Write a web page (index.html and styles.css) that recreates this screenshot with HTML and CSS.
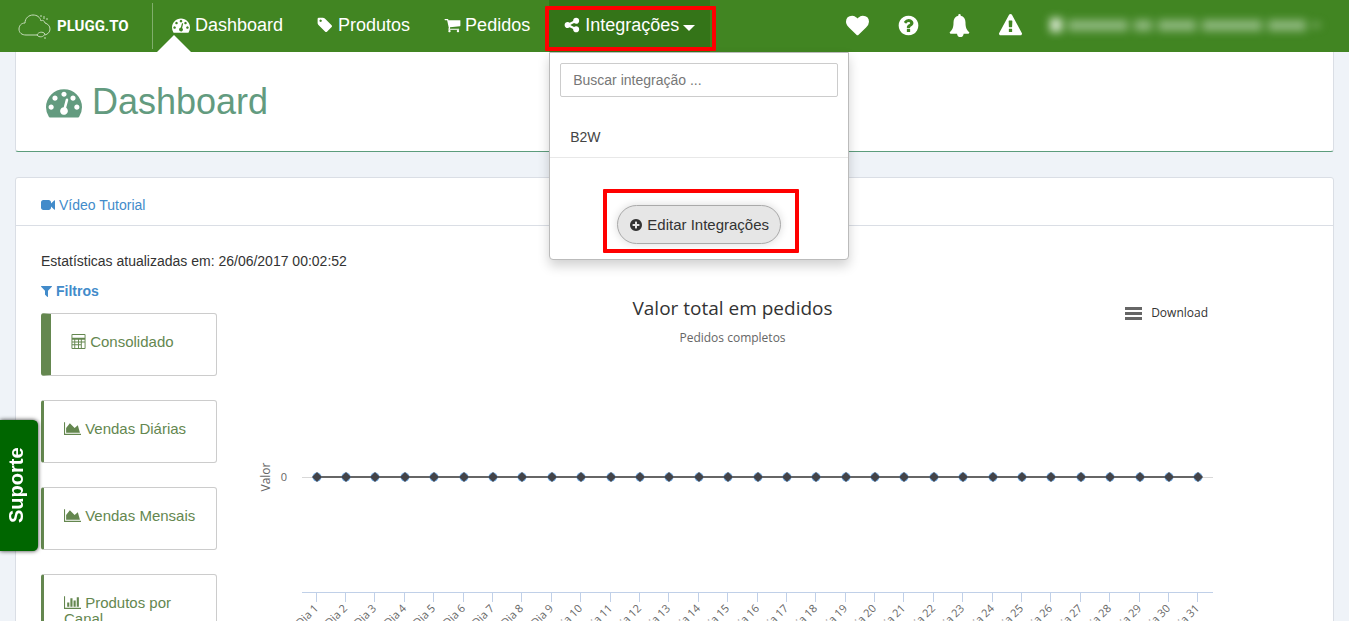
FILE: index.html
```
<!DOCTYPE html>
<html lang="pt-br">
<head>
    <meta charset="UTF-8">
    <meta name="viewport" content="width=device-width, initial-scale=1.0">
    <title>Dashboard - Plugg.To</title>
    <link rel="stylesheet" href="styles.css">
</head>
<body>

    <!-- Ícones -->
    <svg class="sprite" aria-hidden="true">
        <symbol id="i-dashboard" viewBox="0 0 1792 1792"><path d="M384 1152q0-53-37.500-90.500t-90.500-37.500-90.500 37.500-37.500 90.500 37.500 90.500 90.500 37.500 90.500-37.500 37.500-90.500zm192-448q0-53-37.500-90.500t-90.500-37.500-90.500 37.500-37.500 90.500 37.500 90.500 90.500 37.500 90.500-37.500 37.500-90.500zm428 481l101-382q6-26-7.500-48.500t-38.500-29.500-48 6.500-30 39.500l-101 382q-60 5-107 43.500t-63 98.500q-20 77 20 146t117 89 146-20 89-117q16-60-6-117t-72-91zm660-33q0-53-37.500-90.500t-90.500-37.500-90.500 37.500-37.500 90.500 37.500 90.500 90.500 37.500 90.500-37.500 37.500-90.500zm-640-640q0-53-37.500-90.500t-90.500-37.500-90.500 37.500-37.500 90.500 37.500 90.500 90.500 37.500 90.500-37.500 37.500-90.500zm448 192q0-53-37.500-90.500t-90.500-37.500-90.500 37.500-37.500 90.500 37.500 90.500 90.500 37.500 90.500-37.500 37.500-90.500zm320 448q0 261-141 483-19 29-54 29h-1402q-35 0-54-29-141-221-141-483 0-182 71-348t191-286 286-191 348-71 348 71 286 191 191 286 71 348z"/></symbol>
        <symbol id="i-tag" viewBox="64 0 1792 1792"><path d="M576 448q0-53-37.500-90.500t-90.500-37.500-90.500 37.500-37.500 90.500 37.500 90.500 90.500 37.500 90.500-37.500 37.500-90.500zm1067 576q0 53-37 90l-491 492q-39 37-91 37-53 0-90-37l-715-716q-38-37-64.500-101t-26.500-117v-416q0-52 38-90t90-38h416q53 0 117 26.500t102 64.500l715 714q37 39 37 91z"/></symbol>
        <symbol id="i-cart" viewBox="0 0 1792 1792"><path d="M704 1536q0 52-38 90t-90 38-90-38-38-90 38-90 90-38 90 38 38 90zm896 0q0 52-38 90t-90 38-90-38-38-90 38-90 90-38 90 38 38 90zm128-1088v512q0 24-16.500 42.500t-40.500 21.500l-1044 122q13 60 13 70 0 16-24 64h920q26 0 45 19t19 45-19 45-45 19h-1024q-26 0-45-19t-19-45q0-11 8-31.500t16-36 21.500-40 15.500-29.500l-177-823h-204q-26 0-45-19t-19-45 19-45 45-19h256q16 0 28.500 6.500t19.500 15.500 13 24.500 8 26 5.500 29.500 4.500 26h1201q26 0 45 19t19 45z"/></symbol>
        <symbol id="i-share" viewBox="64 0 1792 1792"><path d="M1344 1024q133 0 226.500 93.500t93.500 226.500-93.500 226.500-226.500 93.500-226.500-93.500-93.500-226.500q0-12 2-34l-360-180q-92 86-218 86-133 0-226.500-93.500t-93.500-226.500 93.500-226.500 226.500-93.500q126 0 218 86l360-180q-2-22-2-34 0-133 93.500-226.500t226.500-93.500 226.500 93.500 93.500 226.500-93.500 226.500-226.500 93.500q-126 0-218-86l-360 180q2 22 2 34t-2 34l360 180q92-86 218-86z"/></symbol>
        <symbol id="i-heart" viewBox="0 0 1792 1792"><path d="M896 1664q-26 0-44-18l-624-602q-10-8-27.500-26t-55.500-65.500-68-97.500-53.500-121-23.500-138q0-220 127-344t351-124q62 0 126.500 21.500t120 58 95.500 68.500 76 68q36-36 76-68t95.500-68.500 120-58 126.500-21.500q224 0 351 124t127 344q0 221-229 450l-623 600q-18 18-44 18z"/></symbol>
        <symbol id="i-question" viewBox="0 0 1792 1792"><path d="M1024 1376v-192q0-14-9-23t-23-9h-192q-14 0-23 9t-9 23v192q0 14 9 23t23 9h192q14 0 23-9t9-23zm256-672q0-88-55.500-163t-138.500-116-170-41q-243 0-371 213-15 24 8 42l132 100q7 6 19 6 16 0 25-12 53-68 86-92 34-24 86-24 48 0 85.500 26t37.500 59q0 38-20 61t-68 45q-63 28-115.500 86.500t-52.500 125.500v36q0 14 9 23t23 9h192q14 0 23-9t9-23q0-19 21.500-49.500t54.500-49.500q32-18 49-28.500t46-35 44.500-48 28-60.500 12.500-81zm384 192q0 209-103 385.500t-279.500 279.500-385.500 103-385.500-103-279.500-279.500-103-385.500 103-385.500 279.500-279.500 385.500-103 385.500 103 279.500 279.500 103 385.500z"/></symbol>
        <symbol id="i-bell" viewBox="0 0 1792 1792"><path d="M896 0q-96 0-96 96 0 18 8 44C560 190 430 390 430 640c0 420-90 600-300 780q0 52 38 90t90 38h448q0 106 75 181t181 75 181-75 75-181h316q52 0 90-38t38-90c-210-180-300-360-300-780 0-250-130-450-378-500q8-26 8-44 0-96-96-96z"/></symbol>
        <symbol id="i-warning" viewBox="0 0 1792 1792"><path d="M1024 1375v-190q0-14-9.500-23.500t-22.500-9.500h-192q-13 0-22.500 9.500t-9.500 23.500v190q0 14 9.500 23.500t22.500 9.500h192q13 0 22.500-9.500t9.500-23.500zm-2-374l18-459q0-12-10-19-13-11-24-11h-220q-11 0-24 11-10 7-10 21l17 457q0 10 10 16.500t24 6.500h185q14 0 23.500-6.500t10.500-16.500zm-14-934l768 1408q35 63-2 126-17 29-46.500 46t-63.500 17h-1536q-34 0-63.500-17t-46.500-46q-37-63-2-126l768-1408q17-31 47-49t65-18 65 18 47 49z"/></symbol>
        <symbol id="i-plus" viewBox="128 0 1536 1792"><path d="M1344 960v-128q0-26-19-45t-45-19h-256v-256q0-26-19-45t-45-19h-128q-26 0-45 19t-19 45v256h-256q-26 0-45 19t-19 45v128q0 26 19 45t45 19h256v256q0 26 19 45t45 19h128q26 0 45-19t19-45v-256h256q26 0 45-19t19-45zm320-64q0 209-103 385.500t-279.500 279.500-385.500 103-385.500-103-279.500-279.500-103-385.500 103-385.500 279.500-279.500 385.500-103 385.500 103 279.500 279.500 103 385.500z"/></symbol>
        <symbol id="i-video" viewBox="0 0 1792 1792"><path d="M1792 352v1088q0 42-39 59-13 5-25 5-27 0-45-19l-403-403v166q0 119-84.500 203.500t-203.500 84.500h-704q-119 0-203.500-84.500t-84.500-203.500v-704q0-119 84.500-203.500t203.500-84.500h704q119 0 203.500 84.500t84.500 203.500v165l403-402q18-19 45-19 12 0 25 5 39 17 39 59z"/></symbol>
        <symbol id="i-filter" viewBox="192 0 1408 1792"><path d="M1595 295q17 41-14 70l-493 493v742q0 42-39 59-13 5-25 5-27 0-45-19l-256-256q-19-19-19-45v-486l-493-493q-31-29-14-70 17-39 59-39h1280q42 0 59 39z"/></symbol>
        <symbol id="i-area" viewBox="0 0 2048 1792"><path d="M2048 1536v128h-2048v-1536h128v1408h1920zm-384-1024l256 896h-1664v-576l448-576 576 576z"/></symbol>
        <symbol id="i-bars" viewBox="0 0 2048 1792"><path d="M640 896v512h-256v-512h256zm384-512v1024h-256v-1024h256zm1024 1152v128h-2048v-1536h128v1408h1920zm-640-896v768h-256v-768h256zm384-384v1152h-256v-1152h256z"/></symbol>
        <symbol id="i-calc" viewBox="0 0 15 16"><path fill-rule="evenodd" d="M0 1q0-1 1-1h13q1 0 1 1v14q0 1-1 1H1q-1 0-1-1zM1 1v3h13V1zM1 6v2h2V6zm3 0v2h3V6zm4 0v2h2V6zm3 0v2h3V6zM1 9v2h2V9zm3 0v2h3V9zm4 0v2h2V9zm3 0v6h3V9zM1 12v3h2v-3zm3 0v3h3v-3zm4 0v3h2v-3z"/></symbol>
    </svg>

    <header class="topbar">
        <a class="logo" href="#">
            <svg class="logo-cloud" viewBox="0 0 34 26" aria-hidden="true">
                <path d="M19 22H8C4 22 1 20 1 16c0-3 2-6 6-6 0-5 4-8 8-8 4 0 7 2 8 6M27 10c3 1 5 3 5 6 0 3-2 5-5 6"/>
                <path d="M19 22c1-3 6-4 8-1-1 3-6 4-8 1zM23 8c1-1 3-1 4 2M27 24v2"/>
                <path d="M23 2v2M26 3v3M29 5v2"/>
            </svg>
            <span>PLUGG.TO</span>
        </a>

        <nav class="menu">
            <a class="menu-item ativo" href="#"><svg class="icon"><use href="#i-dashboard"/></svg>Dashboard</a>
            <a class="menu-item" href="#"><svg class="icon"><use href="#i-tag"/></svg>Produtos</a>
            <a class="menu-item" href="#"><svg class="icon"><use href="#i-cart"/></svg>Pedidos</a>
            <div class="menu-grupo">
                <a class="menu-item aberto" href="#"><svg class="icon"><use href="#i-share"/></svg>Integrações<span class="caret"></span></a>
                <div class="destaque destaque-menu"></div>
                <div class="dropdown">
                    <input type="text" class="busca" placeholder="Buscar integração ..." aria-label="Buscar integração">
                    <a class="dropdown-item" href="#">B2W</a>
                    <div class="dropdown-rodape">
                        <button type="button" class="btn-editar"><svg class="icon"><use href="#i-plus"/></svg>Editar Integrações</button>
                        <div class="destaque destaque-botao"></div>
                    </div>
                </div>
            </div>
        </nav>

        <div class="acoes">
            <a href="#" aria-label="Favoritos"><svg class="icon"><use href="#i-heart"/></svg></a>
            <a href="#" aria-label="Ajuda"><svg class="icon"><use href="#i-question"/></svg></a>
            <a href="#" aria-label="Notificações"><svg class="icon"><use href="#i-bell"/></svg></a>
            <a href="#" aria-label="Alertas"><svg class="icon"><use href="#i-warning"/></svg></a>
            <div class="usuario" aria-hidden="true">
                <i class="foto"></i><i class="nome-g"></i><i class="nome-p"></i><i class="nome-m"></i><i class="nome-g"></i><i class="nome-m"></i><i class="seta"></i>
            </div>
        </div>
    </header>

    <main>
        <section class="titulo">
            <h1><svg class="icon"><use href="#i-dashboard"/></svg>Dashboard</h1>
        </section>

        <section class="painel">
            <div class="painel-topo">
                <a href="#"><svg class="icon"><use href="#i-video"/></svg>Vídeo Tutorial</a>
            </div>
            <div class="painel-corpo">
                <p class="atualizado">Estatísticas atualizadas em: 26/06/2017 00:02:52</p>
                <a class="filtros" href="#"><svg class="icon"><use href="#i-filter"/></svg>Filtros</a>

                <div class="conteudo">
                    <div class="cards">
                        <a class="card selecionado" href="#"><svg class="icon"><use href="#i-calc"/></svg> Consolidado</a>
                        <a class="card" href="#"><svg class="icon"><use href="#i-area"/></svg> Vendas Diárias</a>
                        <a class="card" href="#"><svg class="icon"><use href="#i-area"/></svg> Vendas Mensais</a>
                        <a class="card" href="#"><svg class="icon"><use href="#i-bars"/></svg> Produtos por Canal</a>
                    </div>

                    <div class="grafico">
                        <h2>Valor total em pedidos</h2>
                        <p>Pedidos completos</p>
                        <button type="button" class="download"><span class="barras"></span>Download</button>
                        <svg id="plot" class="plot"></svg>
                    </div>
                </div>
            </div>
        </section>
    </main>

    <button type="button" class="suporte">Suporte</button>

    <script src="script.js"></script>
</body>
</html>
```
FILE: styles.css
```
* {
    box-sizing: border-box;
}

body {
    margin: 0;
    font-family: "Liberation Sans", Arial, sans-serif;
    font-size: 14px;
    line-height: 20px;
    color: #333;
    background: #eff3f8;
}

a {
    color: #428bca;
    text-decoration: none;
}

.sprite {
    display: none;
}

.icon {
    width: 14px;
    height: 14px;
    fill: currentColor;
    flex: none;
}

/* Barra superior */
.topbar {
    position: relative;
    z-index: 10;
    display: flex;
    align-items: center;
    height: 52px;
    background: #418522;
}

.logo {
    display: flex;
    align-items: center;
    gap: 5px;
    width: 153px;
    height: 46px;
    padding-left: 18px;
    border-right: 1px solid #80ae6c;
    color: #fff;
    font-family: Roboto, "Liberation Sans", sans-serif;
    font-size: 15px;
    font-weight: bold;
}

.logo-cloud {
    width: 34px;
    height: 26px;
    fill: none;
    stroke: #c5dcb9;
}

.menu {
    display: flex;
    gap: 4px;
    margin-left: 4px;
}

.menu-item {
    position: relative;
    display: flex;
    align-items: center;
    gap: 4px;
    height: 52px;
    padding: 0 15px 2px;
    color: #fff;
    font-size: 18px;
}

.menu-item .icon {
    width: 17px;
    height: 18px;
}

.ativo {
    gap: 5px;
}

.ativo .icon {
    width: 18px;
}

.ativo::after {
    content: "";
    position: absolute;
    left: 0;
    bottom: 0;
    border: 17px solid transparent;
    border-top: 0;
    border-bottom-color: #fff;
}

.aberto {
    background: #347418;
}

.caret {
    margin-top: 6px;
    border: 6px solid transparent;
    border-top-color: #fff;
    border-bottom: 0;
}

.menu-grupo {
    position: relative;
}

.dropdown {
    position: absolute;
    top: 52px;
    left: 0;
    width: 300px;
    padding: 10px 0 15px;
    background: #fff;
    border: 1px solid #bbb;
    border-radius: 0 0 4px 4px;
    box-shadow: 0 6px 12px rgba(0,0,0,0.18);
}

.busca {
    display: block;
    width: 278px;
    height: 34px;
    margin: 0 10px 20px;
    padding: 6px 12px;
    border: 1px solid #ccc;
    border-radius: 2px;
    font: inherit;
}

.busca::placeholder {
    color: #777;
}

.dropdown-item {
    display: block;
    padding: 10px 20px;
    color: #444;
    border-bottom: 1px solid #e8e8e8;
}

.dropdown-rodape {
    position: relative;
    display: flex;
    justify-content: center;
    padding-top: 47px;
}

.btn-editar {
    display: flex;
    align-items: center;
    gap: 4px;
    height: 39px;
    padding: 0 11px;
    border: 1px solid #aaa;
    border-radius: 20px;
    background: #e6e6e6;
    color: #333;
    font: inherit;
    font-size: 15px;
    box-shadow: 0 0 8px rgba(0,0,0,0.15);
}

.destaque {
    position: absolute;
    border: 4px solid #f00;
    border-radius: 1px;
    z-index: 2;
}

.destaque-menu {
    top: 6px;
    left: -4px;
    width: 171px;
    height: 45px;
}

.destaque-botao {
    top: 31px;
    left: 53px;
    width: 196px;
    height: 64px;
}

.acoes {
    display: flex;
    align-items: center;
    gap: 28px;
    margin-left: auto;
    padding: 0 29px 2px 0;
}

.acoes a {
    display: flex;
    color: #fff;
}

.acoes .icon {
    width: 23px;
    height: 23px;
}

/* Nome do usuário desfocado */
.usuario {
    display: flex;
    align-items: center;
    gap: 6px;
    filter: blur(4px);
}

.usuario i {
    height: 11px;
    background: #8fb87e;
}

.usuario .foto { width: 12px; height: 14px; background: #d5e6cc; }
.usuario .nome-g { width: 60px; }
.usuario .nome-m { width: 38px; }
.usuario .nome-p { width: 18px; }
.usuario .seta { width: 8px; height: 4px; }

/* Conteúdo */
main {
    padding: 0 15px 20px;
}

.titulo {
    height: 100px;
    margin-bottom: 25px;
    padding: 30px;
    background: #fff;
    border: 1px solid #dadee5;
    border-top: 0;
    border-bottom-color: #5c9c7c;
    border-radius: 0 0 3px 3px;
}

h1 {
    display: flex;
    align-items: center;
    gap: 10px;
    margin: 0;
    color: #639b7f;
    font-size: 36px;
    font-weight: normal;
    line-height: 40px;
}

h1 .icon {
    width: 36px;
    height: 36px;
}

.painel {
    background: #fff;
    border: 1px solid #dadee5;
    border-radius: 3px;
}

.painel-topo {
    padding: 17px 25px 10px;
    border-bottom: 1px solid #dadee5;
}

.painel-topo a,
.filtros {
    display: flex;
    align-items: center;
    gap: 4px;
}

.painel-corpo {
    padding: 25px;
}

.atualizado {
    margin: 0 0 10px;
}

.filtros {
    font-weight: bold;
}

.filtros .icon {
    width: 11px;
}

.conteudo {
    display: flex;
    gap: 35px;
    margin-top: 12px;
}

.cards {
    display: flex;
    flex-direction: column;
    gap: 24px;
    width: 176px;
    flex: none;
}

.card {
    height: 63px;
    padding: 20px;
    border: 1px solid #ccc;
    border-left: 3px solid #64874f;
    border-radius: 3px;
    color: #64874f;
    font-size: 15px;
    line-height: 16px;
}

.card .icon {
    width: 17px;
    height: 15px;
    vertical-align: -2px;
}

.card.selecionado {
    border-left-width: 10px;
}

.selecionado .icon {
    width: 15px;
}

/* Gráfico */
.grafico {
    position: relative;
    flex: 1;
    min-width: 0;
    margin-right: 95px;
    font-family: "Open Sans", "DejaVu Sans", sans-serif;
    text-align: center;
}

.grafico h2 {
    margin: -17px 0 8px;
    color: #333;
    font-size: 19px;
    font-weight: normal;
    line-height: 24px;
}

.grafico p {
    margin: 0;
    color: #666;
    font-size: 12px;
}

.download {
    position: absolute;
    top: -10px;
    right: 5px;
    display: flex;
    align-items: center;
    gap: 9px;
    padding: 0;
    border: 0;
    background: none;
    color: #333;
    font: inherit;
    font-size: 12px;
}

.barras {
    width: 17px;
    height: 13px;
    border-top: 3px solid #666;
    border-bottom: 3px solid #666;
    background: linear-gradient(#666, #666) 0 2px / 17px 3px no-repeat;
}

.plot {
    display: block;
    width: 100%;
    height: 300px;
}

.plot text {
    fill: #666;
    font-size: 11px;
}

.plot .rotulo-y {
    font-size: 12px;
}

.plot .eixo { stroke: #c0d0e8; }
.plot .grade { stroke: #d8d8d8; }
.plot .serie { stroke: #666; stroke-width: 2; }
.plot .halo { fill: #7cb5ec; }
.plot .ponto { fill: #434348; }

/* Botão lateral */
.suporte {
    position: fixed;
    left: 0;
    top: 420px;
    z-index: 5;
    height: 131px;
    width: 38px;
    padding: 0 0 0 4px;
    border: 0;
    border-radius: 5px 0 0 5px;
    background: #060;
    color: #fff;
    font-family: inherit;
    font-size: 20px;
    font-weight: bold;
    writing-mode: vertical-rl;
    transform: rotate(180deg);
    box-shadow: 0 0 4px rgba(0,0,0,0.8);
}
```
FILE: script.js
```
const svg = document.getElementById('plot');
const DIAS = 31;
const MARGEM = 50;
const LINHA_Y = 129;
const EIXO_Y = 244;

function desenharGrafico() {
    const largura = svg.clientWidth;
    const passo = (largura - MARGEM) / DIAS;
    const x = i => Math.round(MARGEM + passo * (i + 0.5));

    let html = `<line class="grade" x1="${MARGEM}" x2="${largura}" y1="${LINHA_Y + 0.5}" y2="${LINHA_Y + 0.5}"/>`;
    html += `<line class="eixo" x1="${MARGEM}" x2="${largura}" y1="${EIXO_Y + 0.5}" y2="${EIXO_Y + 0.5}"/>`;
    html += `<line class="serie" x1="${x(0)}" x2="${x(DIAS - 1)}" y1="${LINHA_Y}" y2="${LINHA_Y}"/>`;
    html += `<text class="rotulo-y" text-anchor="middle" transform="translate(18 ${LINHA_Y}) rotate(-90)">Valor</text>`;
    html += `<text text-anchor="end" x="35" y="${LINHA_Y + 4}">0</text>`;

    for (let i = 0; i < DIAS; i++) {
        const px = x(i);
        html += `<line class="eixo" x1="${px - 0.5}" x2="${px - 0.5}" y1="${EIXO_Y}" y2="${EIXO_Y + 10}"/>`;
        html += `<circle class="halo" cx="${px}" cy="${LINHA_Y}" r="4.5"/>`;
        html += `<path class="ponto" d="M${px} ${LINHA_Y - 5}l5 5-5 5-5-5z"/>`;
        html += `<text text-anchor="end" transform="translate(${px + 2} ${EIXO_Y + 17}) rotate(-45)">Dia ${i + 1}</text>`;
    }
    svg.innerHTML = html;
}

desenharGrafico();
window.addEventListener('resize', desenharGrafico);
```
